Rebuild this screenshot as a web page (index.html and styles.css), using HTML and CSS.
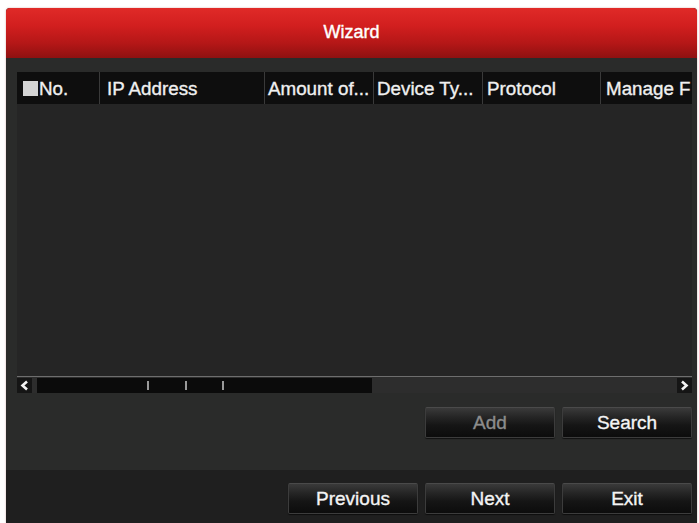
FILE: index.html
```html
<!DOCTYPE html>
<html>
<head>
<meta charset="utf-8">
<link rel="stylesheet" href="styles.css">
</head>
<body>
<div class="window">
  <div class="titlebar">Wizard</div>
  <div class="main">
    <div class="grid-panel">
      <div class="thead">
        <div class="th col-no"><span class="check"></span>No.</div>
        <div class="th col-ip">IP Address</div>
        <div class="th col-amt">Amount of...</div>
        <div class="th col-dev">Device Ty...</div>
        <div class="th col-proto">Protocol</div>
        <div class="th col-manage">Manage F</div>
      </div>
      <div class="tbody"></div>
      <div class="hscroll">
        <div class="arrow">
          <svg width="9" height="11" viewBox="0 0 9 11"><polyline points="7,1.5 2.5,5.5 7,9.5" fill="none" stroke="#f2f2f2" stroke-width="2.6"/></svg>
        </div>
        <div class="track">
          <div class="thumb">
            <span class="tick t1"></span>
            <span class="tick t2"></span>
            <span class="tick t3"></span>
          </div>
        </div>
        <div class="arrow">
          <svg width="9" height="11" viewBox="0 0 9 11"><polyline points="2,1.5 6.5,5.5 2,9.5" fill="none" stroke="#f2f2f2" stroke-width="2.6"/></svg>
        </div>
      </div>
    </div>
    <div class="actions">
      <button class="btn disabled">Add</button>
      <button class="btn">Search</button>
    </div>
  </div>
  <div class="footer">
    <button class="btn">Previous</button>
    <button class="btn">Next</button>
    <button class="btn">Exit</button>
  </div>
</div>
</body>
</html>
```

FILE: styles.css
```css
html, body {
  margin: 0;
  padding: 0;
  background: #ffffff;
}
body {
  width: 699px;
  height: 523px;
  overflow: hidden;
  font-family: "Liberation Sans", Arial, sans-serif;
}
.window {
  margin: 8px 0 0 6px;
  width: 691px;
  height: 515px;
  background: #1f1f1f;
  border-radius: 4px 4px 0 0;
  overflow: hidden;
  box-shadow: 0 0 2px rgba(120, 0, 0, 0.35);
}
.titlebar {
  height: 50px;
  line-height: 48px;
  text-align: center;
  color: #ffffff;
  font-size: 18px;
  -webkit-text-stroke: 0.4px #ffffff;
  background: linear-gradient(#e02a28 0%, #d21f1f 35%, #b51717 70%, #8f1111 100%);
}
.main {
  background: #2a2b2a;
  padding: 14px 5px 0 11px;
  height: 398px;
  display: flex;
  flex-direction: column;
}
.grid-panel {
  display: flex;
  flex-direction: column;
  background: #252525;
}
.thead {
  display: flex;
  height: 32px;
  background: #0e0e0e;
  overflow: hidden;
}
.th {
  flex: none;
  line-height: 33px;
  color: #f0f0f0;
  font-size: 18.8px;
  -webkit-text-stroke: 0.35px #f0f0f0;
  white-space: nowrap;
  overflow: hidden;
  box-sizing: border-box;
  border-right: 1px solid #3a3a3a;
  padding-left: 3px;
}
.col-no {
  width: 83px;
  display: flex;
  align-items: center;
  padding-left: 6px;
}
.check {
  width: 15px;
  height: 15px;
  background: #d4d4d4;
  margin-right: 1px;
  -webkit-text-stroke: 0;
}
.col-ip { width: 165px; padding-left: 7px; }
.col-amt { width: 109px; }
.col-dev { width: 109px; }
.col-proto { width: 118px; padding-left: 4px; }
.col-manage { flex: 1; border-right: none; padding-left: 5px; }
.tbody {
  height: 272px;
  background: #252525;
}
.hscroll {
  height: 17px;
  box-sizing: border-box;
  border-top: 1px solid #6e6e6e;
  background: #2d2d2d;
  display: flex;
  align-items: center;
}
.arrow {
  width: 15px;
  height: 15px;
  background: #151515;
  display: flex;
  align-items: center;
  justify-content: center;
}
.track {
  flex: 1;
  height: 15px;
  padding-left: 5px;
}
.thumb {
  position: relative;
  width: 335px;
  height: 15px;
  background: #0b0b0b;
}
.tick {
  position: absolute;
  top: 3px;
  width: 2px;
  height: 9px;
  background: #9a9a9a;
}
.t1 { left: 110px; }
.t2 { left: 148px; }
.t3 { left: 185px; }
.actions {
  display: flex;
  justify-content: flex-end;
  gap: 7px;
  padding-top: 14px;
}
.footer {
  display: flex;
  justify-content: flex-end;
  gap: 7px;
  padding: 13px 5px 0 0;
  background: #1f1f1f;
}
.btn {
  width: 130px;
  height: 31px;
  margin: 0;
  padding: 0;
  border: 1px solid #3c3c3c;
  border-top-color: #4a4a4a;
  border-radius: 2px;
  background: linear-gradient(#3a3a3a 0%, #262626 30%, #151515 60%, #0c0c0c 100%);
  color: #f4f4f4;
  -webkit-text-stroke: 0.35px #f4f4f4;
  font-family: "Liberation Sans", Arial, sans-serif;
  font-size: 19px;
  box-shadow: 0 1px 1px rgba(0, 0, 0, 0.6);
}
.btn.disabled {
  color: #8c8c8c;
  -webkit-text-stroke: 0.35px #8c8c8c;
}
```
